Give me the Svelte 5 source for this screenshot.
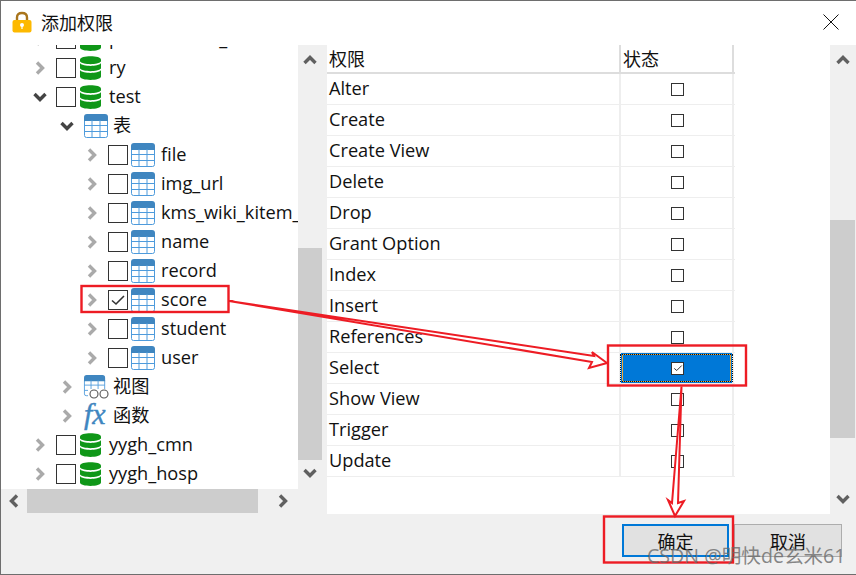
<script>
    const tree = [
        { name: "performance_schema", depth: 0, check: true, icon: "db" },
        { name: "ry", depth: 0, check: true, icon: "db" },
        { name: "test", depth: 0, check: true, icon: "db", open: true },
        { name: "表", depth: 1, icon: "table", open: true },
        { name: "file", depth: 2, check: true, icon: "table" },
        { name: "img_url", depth: 2, check: true, icon: "table" },
        { name: "kms_wiki_kitem_relation", depth: 2, check: true, icon: "table" },
        { name: "name", depth: 2, check: true, icon: "table" },
        { name: "record", depth: 2, check: true, icon: "table" },
        { name: "score", depth: 2, check: true, icon: "table", checked: true },
        { name: "student", depth: 2, check: true, icon: "table" },
        { name: "user", depth: 2, check: true, icon: "table" },
        { name: "视图", depth: 1, icon: "view" },
        { name: "函数", depth: 1, icon: "fx" },
        { name: "yygh_cmn", depth: 0, check: true, icon: "db" },
        { name: "yygh_hosp", depth: 0, check: true, icon: "db" },
    ];

    const privileges = ["Alter", "Create", "Create View", "Delete", "Drop", "Grant Option", "Index", "Insert", "References", "Select", "Show View", "Trigger", "Update"];
</script>

{#snippet chevron(dir, cls)}
    <svg class={"chev " + cls} viewBox="0 0 16 16" width="16" height="16">
        {#if dir === "right"}
            <path d="M5 2.5 L10.5 8 L5 13.5" />
        {:else if dir === "left"}
            <path d="M11 2.5 L5.5 8 L11 13.5" />
        {:else if dir === "up"}
            <path d="M2.5 11 L8 5.5 L13.5 11" />
        {:else}
            <path d="M2.5 5 L8 10.5 L13.5 5" />
        {/if}
    </svg>
{/snippet}

{#snippet tableGrid()}
    <path d="M0.5 6 V21.5 Q0.5 23.5 2.5 23.5 H21.5 Q23.5 23.5 23.5 21.5 V6" fill="#fff" stroke="#4e9bdc" />
    <path d="M0 7 V3 Q0 0 3 0 H21 Q24 0 24 3 V7 Z" fill="#3f86c0" />
    <path d="M0.5 11.5 H23.5 M0.5 17.5 H23.5 M8 6 V23.5 M16 6 V23.5" stroke="#4e9bdc" fill="none" />
{/snippet}

<div class="dialog">
    <header class="title">
        <svg class="lock" viewBox="0 0 20 22" width="20" height="22">
            <path d="M5 10 V6.5 Q5 2 10 2 Q15 2 15 6.5 V10" fill="none" stroke="#a9751c" stroke-width="2.4" />
            <rect x="0.5" y="9" width="19" height="12.5" rx="2" fill="#fdb900" />
            <circle cx="10" cy="14" r="2" fill="#fff" />
            <rect x="9.4" y="14" width="1.2" height="4" fill="#fff" />
        </svg>
        <span class="title-text">添加权限</span>
        <svg class="close" viewBox="0 0 16 16" width="16" height="16">
            <path d="M0.5 0.5 L15.5 15.5 M15.5 0.5 L0.5 15.5" stroke="#111" stroke-width="1" fill="none" />
        </svg>
    </header>

    <div class="main">
        <section class="left">
            <div class="left-top">
                <div class="tree">
                    <div class="tree-list">
                        {#each tree as node}
                            <div class={"node depth" + node.depth}>
                                {@render chevron(node.open ? "down" : "right", node.open ? "dark" : "light")}
                                {#if node.check}
                                    <span class="box">
                                        {#if node.checked}
                                            <svg viewBox="0 0 18 18" width="18" height="18"><path d="M3 9.5 L7 13 L15 5" fill="none" stroke="#333" stroke-width="1.6" /></svg>
                                        {/if}
                                    </span>
                                {/if}
                                <svg class="icon" viewBox="0 0 24 24" width="24" height="24">
                                    {#if node.icon === "db"}
                                        <g fill="#0f9718" transform="translate(1 0)">
                                            <path d="M0 3.5 C0 -1 21 -1 21 3.5 V5.5 C18 9 3 9 0 5.5 Z" />
                                            <path d="M0 7.3 C3 10.8 18 10.8 21 7.3 V12.5 C18 16 3 16 0 12.5 Z" />
                                            <path d="M0 14.3 C3 17.8 18 17.8 21 14.3 V20.5 C21 25 0 25 0 20.5 Z" />
                                        </g>
                                    {:else if node.icon === "table"}
                                        {@render tableGrid()}
                                    {:else if node.icon === "view"}
                                        <g transform="scale(0.88)">{@render tableGrid()}</g>
                                        <rect x="4" y="14" width="20" height="10" fill="#fff" />
                                        <circle cx="10" cy="19" r="4" fill="#fff" stroke="#555" stroke-width="1.1" />
                                        <circle cx="20" cy="19" r="4" fill="#fff" stroke="#555" stroke-width="1.1" />
                                    {:else}
                                        <text x="0" y="20" class="fx">fx</text>
                                    {/if}
                                </svg>
                                <span class="label">{node.name}</span>
                            </div>
                        {/each}
                    </div>
                </div>
                <div class="vbar tree-bar">
                    {@render chevron("up", "bar")}
                    <div class="thumb-v tree-thumb"></div>
                    {@render chevron("down", "bar")}
                </div>
            </div>
            <div class="hbar">
                {@render chevron("left", "bar")}
                <div class="thumb-h"></div>
                {@render chevron("right", "bar")}
            </div>
        </section>

        <section class="right">
            <div class="grid-wrap">
                <div class="grid">
                    <div class="row head">
                        <div class="c1">权限</div>
                        <div class="c2">状态</div>
                    </div>
                    {#each privileges as p}
                        <div class="row">
                            <div class="c1">{p}</div>
                            <div class={p === "Select" ? "c2 mid selected" : "c2 mid"}>
                                <span class="small-box">
                                    {#if p === "Select"}
                                        <svg viewBox="0 0 12 12" width="10" height="10"><path d="M1.5 6.5 L4.5 9 L10.5 3" fill="none" stroke="#333" stroke-width="1.2" /></svg>
                                    {/if}
                                </span>
                            </div>
                        </div>
                    {/each}
                </div>
            </div>
            <div class="vbar right-bar">
                {@render chevron("up", "bar")}
                <div class="thumb-v right-thumb"></div>
                <div class="spacer"></div>
                {@render chevron("down", "bar")}
            </div>
        </section>
    </div>

    <footer class="buttons">
        <button class="btn primary">确定</button>
        <button class="btn">取消</button>
    </footer>

    <svg class="marks" viewBox="0 0 856 575" width="856" height="575">
        <g fill="none" stroke="#ed1c24" stroke-width="2.4">
            <rect x="81.5" y="286" width="147" height="26" />
            <rect x="608" y="345.5" width="138" height="40" />
            <rect x="604" y="516.5" width="129" height="46" />
        </g>
        <g fill="#fff" stroke="#ed1c24" stroke-width="2" stroke-linejoin="miter">
            <path d="M229 301 L594 356 L592 352 L607 363 L589 368 L592 362 Z" />
            <path d="M681.5 386.5 L678 503 L684 501 L675 516 L668 500 L672 503 Z" />
        </g>
    </svg>
    <span class="watermark">CSDN @明快de玄米61</span>
</div>

<style>
    :global(body) {
        margin: 0;
    }
    .dialog {
        position: relative;
        box-sizing: border-box;
        width: 856px;
        height: 575px;
        border: 1px solid #6e6e6e;
        border-right: none;
        background: #f0f0f0;
        display: flex;
        flex-direction: column;
        overflow: hidden;
        font-family: "Open Sans", "Noto Sans CJK SC", sans-serif;
        color: #111;
    }
    .title {
        height: 44px;
        box-sizing: border-box;
        padding-bottom: 2px;
        background: #fff;
        display: flex;
        align-items: center;
        padding-left: 11px;
        flex: none;
    }
    .title-text {
        font-family: "Noto Sans CJK SC", sans-serif;
        font-size: 18px;
        margin-left: 9px;
    }
    .close {
        margin-left: auto;
        margin-right: 17px;
    }
    .main {
        display: flex;
        height: 469px;
        flex: none;
    }
    .left {
        width: 321px;
        flex: none;
        display: flex;
        flex-direction: column;
    }
    .left-top {
        display: flex;
        height: 444px;
    }
    .tree {
        width: 297px;
        background: #fff;
        overflow: hidden;
    }
    .tree-list {
        margin-top: -21px;
    }
    .node {
        height: 29px;
        display: flex;
        align-items: center;
        white-space: nowrap;
        font-size: 18.2px;
    }
    .depth0 {
        padding-left: 31px;
    }
    .depth1 {
        padding-left: 58px;
    }
    .depth2 {
        padding-left: 83px;
    }
    .chev {
        flex: none;
        fill: none;
        stroke-width: 3.4;
    }
    .chev.light {
        stroke: #aaa;
    }
    .chev.dark {
        stroke: #444;
    }
    .chev.bar {
        stroke: #606060;
    }
    .box {
        box-sizing: border-box;
        width: 20px;
        height: 20px;
        border: 1px solid #333;
        background: #fff;
        margin-left: 8px;
        flex: none;
        display: block;
    }
    .box svg {
        display: block;
    }
    .icon {
        flex: none;
        margin-left: 3px;
        overflow: visible;
    }
    .depth1 .icon {
        margin-left: 9px;
    }
    .depth1 .label {
        margin-left: 5px;
    }
    .fx {
        font-family: "Liberation Serif", serif;
        font-style: italic;
        font-size: 30px;
        fill: #3f86c0;
        stroke: #3f86c0;
        stroke-width: 0.4;
    }
    .label {
        margin-left: 6px;
        line-height: 29px;
    }
    .vbar {
        width: 24px;
        height: 468px;
        flex: none;
        background: #f0f0f0;
        display: flex;
        flex-direction: column;
        align-items: center;
    }
    .tree-bar {
        padding-top: 7px;
        box-sizing: border-box;
    }
    .thumb-v {
        width: 100%;
        flex: none;
        background: #cdcdcd;
    }
    .tree-thumb {
        height: 212px;
        margin-top: 180px;
    }
    .tree-bar .chev:last-child {
        margin-top: 5px;
    }
    .hbar {
        height: 24px;
        width: 297px;
        display: flex;
        align-items: center;
        padding-left: 5px;
        box-sizing: border-box;
    }
    .thumb-h {
        width: 231px;
        height: 24px;
        margin-left: 5px;
        margin-right: 17px;
        background: #cdcdcd;
    }
    .right {
        flex: 1;
        margin-left: 5px;
        display: flex;
    }
    .grid-wrap {
        width: 503px;
        background: #fff;
    }
    .grid {
        width: 408px;
    }
    .row {
        display: flex;
        height: 31px;
        box-sizing: border-box;
        border-bottom: 1px solid #eee;
        font-size: 18.2px;
    }
    .head {
        height: 29px;
        border-bottom: 2px solid #ddd;
    }
    .c1 {
        width: 292px;
        box-sizing: border-box;
        padding-left: 2px;
        line-height: 29px;
    }
    .head .c1,
    .head .c2 {
        font-family: "Noto Sans CJK SC", sans-serif;
        font-size: 18px;
        line-height: 27px;
    }
    .c2 {
        width: 115px;
        box-sizing: border-box;
        border-left: 2px solid #eee;
        border-right: 2px solid #eee;
        padding-left: 2px;
    }
    .head .c2 {
        border-color: #ddd;
    }
    .mid {
        display: flex;
        align-items: center;
        justify-content: center;
    }
    .small-box {
        box-sizing: border-box;
        width: 13px;
        height: 13px;
        border: 1px solid #333;
        background: #fff;
        display: flex;
        align-items: center;
        justify-content: center;
    }
    .selected {
        background: #0078d7;
        box-shadow: inset 0 0 0 1px #0078d7, inset 0 0 0 2px #f4a733;
        outline: 1px dotted #111;
        outline-offset: -2px;
    }
    .right-bar {
        width: 25px;
        padding-top: 7px;
        box-sizing: border-box;
    }
    .right-thumb {
        height: 218px;
        margin-top: 152px;
    }
    .spacer {
        flex: 1;
    }
    .right-bar .chev:last-child {
        margin-bottom: 6px;
    }
    .buttons {
        flex: 1;
        display: flex;
        justify-content: flex-end;
        align-items: flex-start;
        gap: 5px;
        padding-top: 10px;
        padding-right: 14px;
    }
    .btn {
        width: 108px;
        height: 33px;
        box-sizing: border-box;
        border: 1px solid #adadad;
        background: #e1e1e1;
        padding: 0;
        font-family: "Noto Sans CJK SC", sans-serif;
        font-size: 18px;
        color: #111;
    }
    .primary {
        width: 107px;
        border: 2px solid #0078d7;
    }
    .marks {
        position: absolute;
        left: -1px;
        top: -1px;
        pointer-events: none;
    }
    .watermark {
        position: absolute;
        left: 646px;
        top: 543px;
        font-family: "Open Sans", "Noto Sans CJK SC", sans-serif;
        font-size: 19.6px;
        line-height: 24px;
        white-space: nowrap;
        color: rgba(105, 105, 105, 0.8);
    }
</style>
